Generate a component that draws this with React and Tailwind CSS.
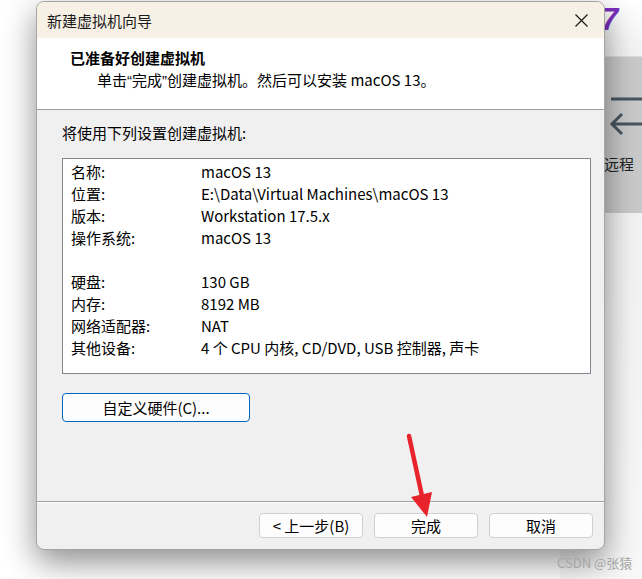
import React from "react";

const FONT = "font-['Noto_Sans_CJK_SC','Noto_Sans',sans-serif]";

function Row({ label, value }) {
  return (
    <div className="flex h-[22px] items-center">
      <div className="w-[130px] shrink-0">{label}</div>
      <div>{value}</div>
    </div>
  );
}

function Btn({ children, className = "" }) {
  return (
    <button
      className={`flex h-[25px] w-[104px] items-center justify-center rounded-[4px] border border-[#d0d0d0] bg-[#fdfdfd] text-[15px] leading-none text-black ${className}`}
    >
      {children}
    </button>
  );
}

const Q = ({ c }) => <span className="font-['Liberation_Sans',sans-serif]">{c}</span>;

export default function App() {
  return (
    <div className={`relative h-[579px] w-[642px] overflow-hidden bg-white ${FONT}`}>
      {/* background desktop app */}
      <div className="absolute left-[560px] top-0 h-[56px] w-[82px] bg-gradient-to-b from-white to-[#f2f2f2]" />
      <div className="absolute left-[601px] top-[4px] text-[31px] font-bold italic leading-none text-[#7b2fbe] font-['Liberation_Sans',sans-serif]">
        7
      </div>
      <div className="absolute left-[560px] top-[56px] h-[157px] w-[82px] border-t border-[#dcdcdc] bg-[#c9c9c9]">
        <svg className="absolute left-[49px] top-[30px]" width="40" height="50" viewBox="0 0 40 50">
          <line x1="2" y1="12" x2="40" y2="12" stroke="#475560" strokeWidth="3" />
          <line x1="3" y1="37" x2="40" y2="37" stroke="#475560" strokeWidth="3" />
          <polyline points="13,27 3,37 13,47" fill="none" stroke="#475560" strokeWidth="3" />
        </svg>
        <div className="absolute left-[29px] top-[99px] text-[15px] leading-none text-[#222]">连远程</div>
      </div>
      <div className="absolute left-[560px] top-[213px] h-[366px] w-[82px] bg-gradient-to-b from-[#f2f2f2] to-[#f8f8f8]" />

      {/* dialog */}
      <div className="relative ml-[36px] mt-[1px] flex h-[549px] w-[569px] flex-col overflow-hidden rounded-[8px] border border-[#a5a5a5] bg-[#f0f0f0] text-[15px] text-black shadow-[0_12px_32px_rgba(0,0,0,0.45)]">
        {/* title bar */}
        <div className="flex h-[36px] shrink-0 items-center justify-between bg-[#f7f0e5] pl-[10px] pr-[16px]">
          <span className="text-[15px] leading-none text-[#1a1a1a]">新建虚拟机向导</span>
          <svg width="13" height="13" viewBox="0 0 13 13">
            <path d="M0.5 0.5 L12.5 12.5 M12.5 0.5 L0.5 12.5" stroke="#1a1a1a" strokeWidth="1.2" />
          </svg>
        </div>
        {/* header */}
        <div className="h-[72px] shrink-0 border-b border-[#a0a0a0] bg-white pl-[33px] pt-[10px]">
          <div className="text-[15px] font-bold leading-[20px]">已准备好创建虚拟机</div>
          <div className="mt-[2px] pl-[27px] text-[15px] leading-[20px]">
            单击<Q c="“" />完成<Q c="”" />创建虚拟机。然后可以安装 macOS 13。
          </div>
        </div>
        {/* body */}
        <div className="flex flex-1 flex-col px-[25px] pt-[13px]">
          <div className="leading-[20px]">将使用下列设置创建虚拟机:</div>
          <div className="mt-[15px] h-[216px] w-[529px] border border-[#828790] bg-white pl-[8px] pt-[2px]">
            <Row label="名称:" value="macOS 13" />
            <Row label="位置:" value="E:\Data\Virtual Machines\macOS 13" />
            <Row label="版本:" value="Workstation 17.5.x" />
            <Row label="操作系统:" value="macOS 13" />
            <div className="h-[22px]" />
            <Row label="硬盘:" value="130 GB" />
            <Row label="内存:" value="8192 MB" />
            <Row label="网络适配器:" value="NAT" />
            <Row label="其他设备:" value="4 个 CPU 内核, CD/DVD, USB 控制器, 声卡" />
          </div>
          <button className="mt-[19px] flex h-[29px] w-[188px] items-center justify-center rounded-[4px] border border-[#0067c0] bg-[#fdfdfd] text-[15px] leading-none">
            自定义硬件(C)...
          </button>
        </div>
        {/* footer */}
        <div className="flex h-[48px] shrink-0 items-start justify-end gap-[11px] border-t border-[#a0a0a0] pr-[11px] pt-[11px] shadow-[inset_0_1px_0_#ffffff]">
          <Btn>&lt; 上一步(B)</Btn>
          <Btn>完成</Btn>
          <Btn>取消</Btn>
        </div>
      </div>

      {/* red annotation arrow */}
      <svg className="absolute left-0 top-0" width="642" height="579" viewBox="0 0 642 579">
        <line x1="409" y1="436" x2="422" y2="496" stroke="#e8232b" strokeWidth="4.5" strokeLinecap="round" />
        <polygon points="411,497 432,492 427,517" fill="#e8232b" />
      </svg>

      <div className="absolute left-[557px] top-[556px] text-[13px] leading-none text-[#a5a5a5]">CSDN @张猿</div>
    </div>
  );
}
